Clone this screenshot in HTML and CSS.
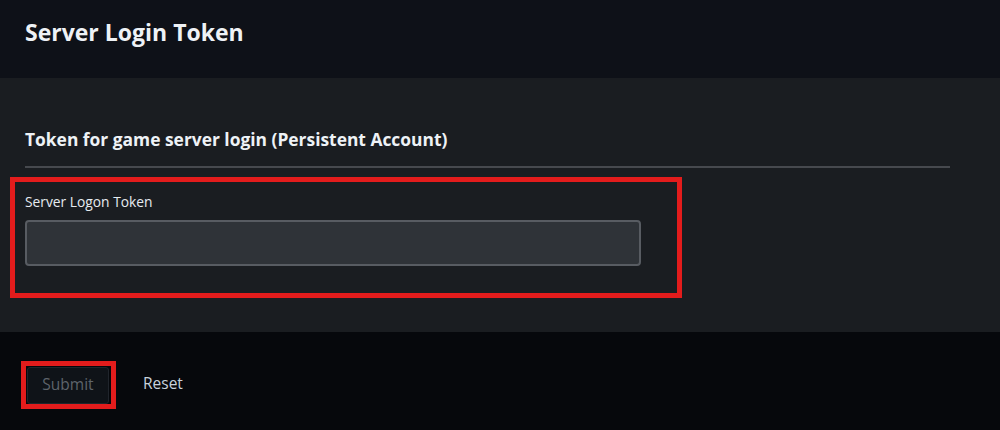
FILE: index.html
```html
<!DOCTYPE html>
<html>
<head>
<meta charset="utf-8">
<link rel="stylesheet" href="styles.css">
</head>
<body>
<header class="page-header">
  <h1 class="page-title">Server Login Token</h1>
</header>
<section class="panel">
  <h2 class="section-title">Token for game server login (Persistent Account)</h2>
  <hr class="divider">
  <div class="highlight field-highlight">
    <label class="field-label" for="token">Server Logon Token</label>
    <input class="field-input" id="token" type="text">
  </div>
</section>
<footer class="actions">
  <div class="highlight button-highlight">
    <button class="btn btn-submit" type="button">Submit</button>
  </div>
  <button class="btn btn-reset" type="button">Reset</button>
</footer>
</body>
</html>
```

FILE: styles.css
```css
html, body {
  margin: 0;
  padding: 0;
}
body {
  background: #06080c;
  font-family: "Open Sans", "Noto Sans", sans-serif;
  color: #e6ebf0;
  width: 1000px;
  height: 430px;
  overflow: hidden;
}
.page-header {
  height: 78px;
  box-sizing: border-box;
  background: #0e1118;
  padding: 16px 25px 0;
}
.page-title {
  margin: 0;
  font-size: 23px;
  font-weight: 700;
  line-height: 32px;
  color: #eef2f6;
}
.panel {
  background: #1a1d21;
  height: 254px;
  box-sizing: border-box;
  padding: 48px 50px 0 25px;
}
.section-title {
  margin: 0;
  font-size: 17.4px;
  font-weight: 700;
  line-height: 26px;
  color: #eef2f6;
}
.divider {
  margin: 14px 0 0;
  border: 0;
  height: 2px;
  background: #46494e;
}
.highlight {
  border: 5px solid #e31c1c;
}
.field-highlight {
  margin: 9px 0 0 -15px;
  width: 672px;
  box-sizing: border-box;
  height: 121px;
  padding: 10px 36px 0 10px;
  display: flex;
  flex-direction: column;
  gap: 9px;
}
.field-label {
  font-size: 13.8px;
  line-height: 19px;
  color: #e6ebf0;
}
.field-input {
  box-sizing: border-box;
  width: 616px;
  height: 46px;
  background: #2f3338;
  border: 2px solid #585c62;
  border-radius: 4px;
  outline: none;
}
.actions {
  display: flex;
  align-items: center;
  gap: 27px;
  padding: 29px 0 0 21px;
}
.button-highlight {
  padding: 1px 2px 0 1px;
  display: flex;
}
.btn {
  font-family: "Open Sans", "Noto Sans", sans-serif;
  font-size: 15.5px;
  cursor: pointer;
}
.btn-submit {
  width: 82px;
  height: 37px;
  padding: 0 0 4px;
  background: #0f1318;
  border: 1px solid #20252c;
  border-radius: 3px;
  color: #5e646b;
}
.btn-reset {
  background: none;
  border: 0;
  padding: 0 0 4px;
  color: #c8d2dc;
}
```
